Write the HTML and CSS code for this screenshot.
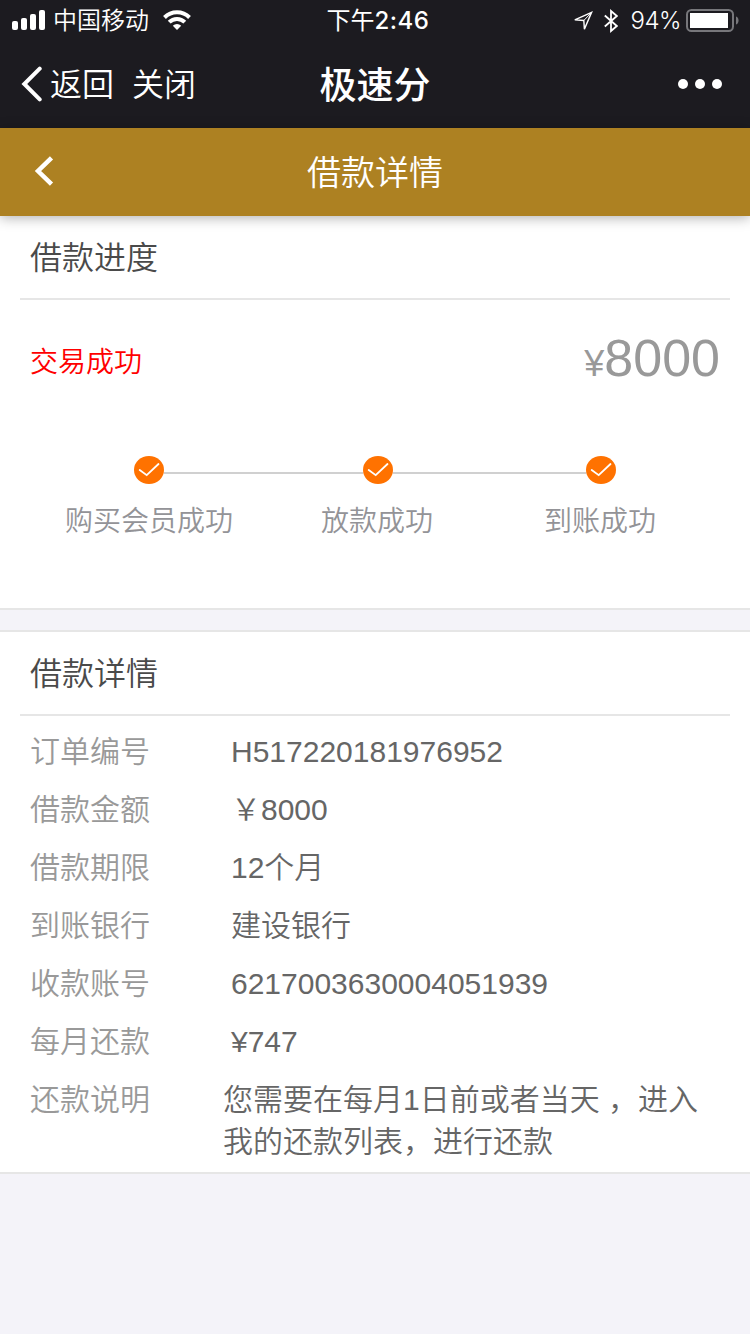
FILE: index.html
```html
<!DOCTYPE html>
<html lang="zh-CN">
<head>
  <meta charset="UTF-8" />
  <title>借款详情</title>
  <link rel="stylesheet" href="styles.css">
</head>
<body>
  <div class="status-bar">
    <div class="status-left">
      <svg class="signal" width="34" height="20" viewBox="0 0 34 20" fill="#fff">
        <rect x="0" y="11" width="6" height="9" rx="2" />
        <rect x="9" y="8" width="6" height="12" rx="2" />
        <rect x="18" y="4" width="6" height="16" rx="2" />
        <rect x="27" y="0" width="6" height="20" rx="2" />
      </svg>
      <span class="carrier">中国移动</span>
      <svg class="wifi" width="28" height="20" viewBox="0 0 28 20" fill="none" stroke="#fff" stroke-width="4">
        <path d="M1.5 7.5a17.7 17.7 0 0 1 25 0" />
        <path d="M6.2 12.2a11 11 0 0 1 15.6 0" />
        <path d="M14 20l-4.2-4.2a6 6 0 0 1 8.4 0z" fill="#fff" stroke="none" />
      </svg>
    </div>
    <div class="time">下午<b>2:46</b></div>
    <div class="status-right">
      <svg class="location" width="20" height="20" viewBox="0 0 20 20" fill="none" stroke="#fff" stroke-width="1.4">
        <path d="M18.6 1.4L1.8 8.9l9 .6.6 8.6z" />
        <path d="M18.6 1.4L10.8 9.5" stroke-width="1" />
      </svg>
      <svg class="bluetooth" width="14" height="24" viewBox="0 0 14 24" fill="none" stroke="#fff" stroke-width="1.8">
        <path d="M0.8 6.5l12 10.5L7 22V2l5.8 5L0.8 17.5" />
      </svg>
      <span class="percent">94%</span>
      <svg class="battery" width="54" height="24" viewBox="0 0 54 24">
        <rect x="1" y="1" width="46" height="21" rx="4.5" fill="none" stroke="#77777b" stroke-width="2" />
        <rect x="4" y="4" width="38" height="15" fill="#fff" />
        <path d="M50 7.5c3.4 1 3.4 7 0 8z" fill="#77777b" />
      </svg>
    </div>
  </div>

  <div class="nav-bar">
    <div class="nav-left">
      <svg width="22" height="36" viewBox="0 0 22 36" fill="none" stroke="#fff" stroke-width="4" stroke-linecap="round">
        <path d="M18.7 2.7L3.3 18l15.4 15.4" />
      </svg>
      <span class="nav-back">返回</span>
      <span class="nav-close">关闭</span>
    </div>
    <div class="nav-title">极速分</div>
    <div class="nav-more"><i></i><i></i><i></i></div>
  </div>

  <header class="header">
    <svg class="header-back" width="20" height="30" viewBox="0 0 20 30" fill="none" stroke="#fff" stroke-width="4.5">
      <path d="M17.5 1.8L4 15l13.5 13.2" />
    </svg>
    <h1>借款详情</h1>
  </header>

  <section class="card">
    <h2>借款进度</h2>
    <div class="summary">
      <span class="state">交易成功</span>
      <span class="amount"><small>¥</small>8000</span>
    </div>
    <div class="steps">
      <svg class="check" viewBox="0 0 30 28">
        <ellipse cx="15" cy="14" rx="15" ry="14" />
        <path d="M5.7 14l7 5.2L24.5 8" />
      </svg>
      <span class="line"></span>
      <svg class="check" viewBox="0 0 30 28">
        <ellipse cx="15" cy="14" rx="15" ry="14" />
        <path d="M5.7 14l7 5.2L24.5 8" />
      </svg>
      <span class="line"></span>
      <svg class="check" viewBox="0 0 30 28">
        <ellipse cx="15" cy="14" rx="15" ry="14" />
        <path d="M5.7 14l7 5.2L24.5 8" />
      </svg>
    </div>
    <div class="step-labels">
      <span>购买会员成功</span>
      <span>放款成功</span>
      <span>到账成功</span>
    </div>
  </section>

  <section class="card detail">
    <h2>借款详情</h2>
    <dl>
      <div class="row"><dt>订单编号</dt><dd>H517220181976952</dd></div>
      <div class="row"><dt>借款金额</dt><dd>￥8000</dd></div>
      <div class="row"><dt>借款期限</dt><dd>12个月</dd></div>
      <div class="row"><dt>到账银行</dt><dd>建设银行</dd></div>
      <div class="row"><dt>收款账号</dt><dd>6217003630004051939</dd></div>
      <div class="row"><dt>每月还款</dt><dd>¥747</dd></div>
      <div class="row note"><dt>还款说明</dt><dd>您需要在每月1日前或者当天 ，进入<br />我的还款列表，进行还款</dd></div>
    </dl>
  </section>
</body>
</html>
```
FILE: styles.css
```css
* {
  box-sizing: border-box;
  margin: 0;
  padding: 0;
}
body {
  width: 750px;
  min-height: 1334px;
  background-color: #f4f3f9;
  font-family: "Liberation Sans", "Noto Sans CJK SC", sans-serif;
  font-weight: 350;
}
svg {
  display: block;
  flex: none;
}

/* status bar */
.status-bar {
  display: grid;
  grid-template-columns: 1fr auto 1fr;
  height: 40px;
  background-color: #1c1b20;
  color: #fff;
  font-family: Inter, "Noto Sans CJK SC", sans-serif;
  font-size: 24px;
  line-height: 42px;
}
.status-left {
  display: flex;
  align-items: center;
  padding-left: 12px;
}
.carrier {
  margin-left: 7px;
}
.wifi {
  margin-left: 14px;
}
.signal,
.wifi {
  margin-bottom: 2px;
}
.time {
  padding-left: 6px;
  font-weight: 400;
}
.time b {
  font-weight: 500;
  letter-spacing: 0.5px;
}
.status-right {
  display: flex;
  align-items: center;
  justify-content: flex-end;
  padding-right: 10px;
}
.location,
.bluetooth {
  margin-bottom: 1px;
}
.bluetooth {
  margin-left: 11px;
}
.percent {
  margin: 0 5px 0 12px;
  letter-spacing: -0.5px;
}
.battery {
  margin-bottom: 1px;
}

/* navigation bar */
.nav-bar {
  display: grid;
  grid-template-columns: 1fr auto 1fr;
  align-items: center;
  height: 88px;
  background-color: #1c1b20;
  color: #fff;
  font-size: 32px;
  line-height: 88px;
}
.nav-left {
  display: flex;
  align-items: center;
  padding-left: 21px;
}
.nav-back {
  margin-left: 7px;
}
.nav-close {
  margin-left: 18px;
}
.nav-back,
.nav-close {
  height: 88px;
  line-height: 91px;
}
.nav-title {
  height: 88px;
  font-size: 37px;
  font-weight: 500;
  line-height: 93px;
}
.nav-more {
  display: flex;
  justify-content: flex-end;
  gap: 7px;
  padding-right: 28px;
}
.nav-more i {
  width: 10px;
  height: 10px;
  border-radius: 50%;
  background-color: #fff;
}

/* page header */
.header {
  position: relative;
  z-index: 1;
  display: grid;
  grid-template-columns: 1fr auto 1fr;
  align-items: center;
  height: 88px;
  padding-left: 34px;
  padding-right: 34px;
  background-color: #ad8122;
  box-shadow: 0 2px 12px rgba(0, 0, 0, 0.3);
  color: #fff;
}
.header-back {
  margin-bottom: 2px;
}
.header h1 {
  height: 88px;
  font-size: 34px;
  font-weight: 350;
  line-height: 91px;
}

/* cards */
.card {
  height: 394px;
  background-color: #fff;
  border-bottom: 2px solid #e6e6e6;
}
.card h2 {
  height: 84px;
  margin: 0 20px;
  padding-left: 10px;
  border-bottom: 2px solid #e6e6e6;
  color: #4a4a4a;
  font-size: 32px;
  font-weight: 350;
  line-height: 84px;
}
.summary {
  display: flex;
  justify-content: space-between;
  align-items: center;
  height: 120px;
  padding: 0 30px;
}
.state {
  color: #f00;
  font-size: 28px;
}
.amount {
  padding-bottom: 5px;
  color: #999;
  font-size: 52px;
}
.amount small {
  font-size: 36px;
}

/* progress */
.steps {
  display: flex;
  margin-top: 36px;
  padding: 0 134px;
}
.check {
  width: 30px;
  height: 28px;
}
.check ellipse {
  fill: #ff7200;
}
.check path {
  fill: none;
  stroke: #fff;
  stroke-width: 1.8;
  stroke-linecap: round;
}
.line {
  flex: 1 1 auto;
  height: 2px;
  margin-top: 16px;
  background-color: #d0d0d0;
}
.line:nth-of-type(1) {
  flex: 0 0 199px;
}
.line:nth-of-type(2) {
  flex: 0 0 193px;
}
.step-labels {
  display: grid;
  grid-template-columns: 256px 223px auto;
  margin-top: 18px;
  padding-left: 65px;
  color: #939397;
  font-size: 28px;
  line-height: 40px;
}

/* loan detail */
.detail {
  height: 544px;
  margin-top: 20px;
  border-top: 2px solid #e6e6e6;
}
.detail dl {
  padding: 15px 30px 0;
}
.row {
  display: flex;
  margin-bottom: 16px;
  font-size: 30px;
  line-height: 42px;
}
.row dt {
  width: 201px;
  color: #999;
}
.row dd {
  color: #666;
}
.note dt {
  width: 193px;
}
```
